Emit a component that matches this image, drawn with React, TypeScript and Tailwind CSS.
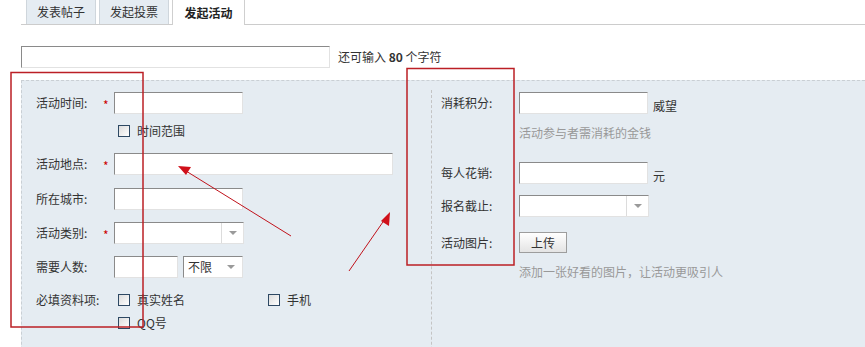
import React from "react";

const inputCls =
  "h-[22px] bg-white border border-t-[#8a8a8a] border-l-[#8a8a8a] border-r-[#e2e2e2] border-b-[#e2e2e2]";

const Arrow = () => (
  <span className="w-0 h-0 border-l-[4px] border-r-[4px] border-t-[4px] border-l-transparent border-r-transparent border-t-[#9a9a9a]" />
);

const Select = ({ w, text, split = true }: { w: string; text?: string; split?: boolean }) => (
  <div className={`${inputCls} ${w} flex items-center`}>
    <span className="flex-1 pl-[4px] text-[#333]">{text}</span>
    <span
      className={`w-[22px] h-full flex items-center justify-center ${split ? "border-l border-[#dcdcdc]" : ""}`}
    >
      <Arrow />
    </span>
  </div>
);

const Check = ({ label, className = "" }: { label: string; className?: string }) => (
  <label className={`flex items-center ${className}`}>
    <span className="w-[12px] h-[12px] border border-[#2d4863] bg-gradient-to-br from-[#dcdcdc] to-white" />
    <span className="ml-[7px] text-[#333]">{label}</span>
  </label>
);

const Label = ({ text, req }: { text: string; req?: boolean }) => (
  <>
    <span className="w-[67px] text-[#333]">{text}</span>
    <span className="w-[11px] text-[#c00] pt-[3px]">{req ? "*" : ""}</span>
  </>
);

const Tab = ({ text, active }: { text: string; active?: boolean }) => (
  <div
    className={
      active
        ? "w-[73px] h-[25px] -mb-px bg-white border-l border-r border-[#cfcfcf] flex items-center justify-center font-bold text-[#222]"
        : "w-[70px] h-[24px] bg-[#e5ecf2] border-l border-r border-[#cfd6dc] flex items-center justify-center text-[#333]"
    }
  >
    {text}
  </div>
);

export default function App() {
  return (
    <div className="relative w-[865px] h-[347px] overflow-hidden bg-white text-[12px] leading-[16px] font-['Noto_Sans_CJK_SC','Noto_Sans',sans-serif]">
      {/* tabs */}
      <div className="ml-[21px] h-[25px] border-b border-[#cccccc] flex items-start pl-[5px] gap-[3px]">
        <Tab text="发表帖子" />
        <Tab text="发起投票" />
        <Tab text="发起活动" active />
      </div>

      {/* subject */}
      <div className="mt-[21px] ml-[21px] flex items-center">
        <div className={`${inputCls} w-[309px]`} />
        <span className="ml-[8px] text-[#333]">
          还可输入 <b className="font-bold">80</b> 个字符
        </span>
      </div>

      {/* panel */}
      <div className="mt-[12px] ml-[21px] h-[300px] bg-[#e5ecf2] border-t border-l border-dashed border-[#c9cfd4] flex">
        {/* left column */}
        <div className="w-[409px] pl-[14px] pt-[11px]">
          <div className="flex items-center h-[22px]">
            <Label text="活动时间:" req />
            <div className={`${inputCls} w-[129px]`} />
          </div>
          <div className="flex items-center h-[22px] mt-[6px] pl-[82px]">
            <Check label="时间范围" />
          </div>
          <div className="flex items-center h-[22px] mt-[11px]">
            <Label text="活动地点:" req />
            <div className={`${inputCls} w-[279px]`} />
          </div>
          <div className="flex items-center h-[22px] mt-[13px]">
            <Label text="所在城市:" />
            <div className={`${inputCls} w-[129px]`} />
          </div>
          <div className="flex items-center h-[22px] mt-[12px]">
            <Label text="活动类别:" req />
            <Select w="w-[130px]" />
          </div>
          <div className="flex items-center h-[22px] mt-[12px]">
            <Label text="需要人数:" />
            <div className={`${inputCls} w-[64px]`} />
            <div className="ml-[5px]">
              <Select w="w-[60px]" text="不限" split={false} />
            </div>
          </div>
          <div className="flex items-center h-[22px] mt-[11px]">
            <span className="w-[82px] text-[#333]">必填资料项:</span>
            <Check label="真实姓名" className="w-[150px]" />
            <Check label="手机" />
          </div>
          <div className="flex items-center h-[22px] mt-[1px] pl-[82px]">
            <Check label="QQ号" />
          </div>
        </div>

        {/* right column */}
        <div className="mt-[9px] pl-[9px] pt-[2px] border-l border-dashed border-[#c4c4c4] flex-1">
          <div className="flex items-center h-[22px]">
            <span className="w-[78px] text-[#333]">消耗积分:</span>
            <div className={`${inputCls} w-[129px]`} />
            <span className="ml-[5px] pt-[6px] text-[#333]">威望</span>
          </div>
          <div className="mt-[11px] ml-[78px] text-[#999]">活动参与者需消耗的金钱</div>
          <div className="flex items-center h-[22px] mt-[21px]">
            <span className="w-[78px] text-[#333]">每人花销:</span>
            <div className={`${inputCls} w-[129px]`} />
            <span className="ml-[5px] pt-[6px] text-[#333]">元</span>
          </div>
          <div className="flex items-center h-[22px] mt-[11px]">
            <span className="w-[78px] text-[#333]">报名截止:</span>
            <Select w="w-[130px]" />
          </div>
          <div className="flex items-center h-[21px] mt-[15px]">
            <span className="w-[78px] text-[#333]">活动图片:</span>
            <button className="w-[48px] h-[21px] border border-[#9d9d9d] bg-gradient-to-b from-white to-[#e4e4e4] text-[#333] flex items-center justify-center">
              上传
            </button>
          </div>
          <div className="mt-[11px] ml-[78px] text-[#999]">添加一张好看的图片，让活动更吸引人</div>
        </div>
      </div>

      {/* annotations */}
      <svg className="absolute inset-0 pointer-events-none" width="865" height="347">
        <rect x="11" y="72.5" width="132" height="254.5" fill="none" stroke="#bb1f25" strokeWidth="1.5" />
        <rect x="407" y="68.5" width="107" height="196.5" fill="none" stroke="#bb1f25" strokeWidth="1.5" />
        <line x1="291" y1="236" x2="186" y2="171" stroke="#c0121b" strokeWidth="1" />
        <polygon points="178,166 191,167 186,175" fill="#d0101a" />
        <line x1="349" y1="271" x2="385" y2="219" stroke="#c0121b" strokeWidth="1" />
        <polygon points="390,212 389,226 381,221" fill="#d0101a" />
      </svg>
    </div>
  );
}
